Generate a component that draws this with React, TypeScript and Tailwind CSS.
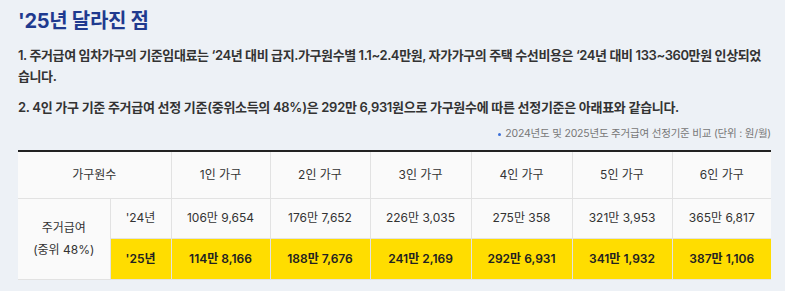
const KR = "font-['Inter','Noto_Sans_CJK_KR',sans-serif]";

const houses = ["1인 가구", "2인 가구", "3인 가구", "4인 가구", "5인 가구", "6인 가구"];
const prev = ["106만 9,654", "176만 7,652", "226만 3,035", "275만 358", "321만 3,953", "365만 6,817"];
const next = ["114만 8,166", "188만 7,676", "241만 2,169", "292만 6,931", "341만 1,932", "387만 1,106"];

export default function App() {
  return (
    <div className={`${KR} w-[785px] h-[291px] bg-[#edf1f6] pl-[18px] pr-[14px] pt-[6px] text-[#333]`}>
      <h1 className="text-[20px] leading-[30px] font-bold text-[#1f3a8f] tracking-[-0.3px]">'25년 달라진 점</h1>

      <p className="mt-[9px] text-[13px] leading-[21px] font-semibold text-[#333] tracking-[-0.4px]">
        <span className="whitespace-nowrap">1. 주거급여 임차가구의 기준임대료는 ‘24년 대비 급지.가구원수별 1.1~2.4만원, 자가가구의 주택 수선비용은 ‘24년 대비 133~360만원 인상되었</span>
        <br />
        습니다.
      </p>
      <p className="mt-[10px] text-[13px] leading-[21px] font-semibold text-[#333] tracking-[-0.3px]">
        2. 4인 가구 기준 주거급여 선정 기준(중위소득의 48%)은 292만 6,931원으로 가구원수에 따른 선정기준은 아래표와 같습니다.
      </p>

      <div className="mt-[8px] flex justify-end items-center gap-[4px] text-[10.5px] leading-[16px] text-[#777] tracking-[-0.2px]">
        <span className="w-[3px] h-[3px] rounded-full bg-[#3b6fd8]" />
        <span>2024년도 및 2025년도 주거급여 선정기준 비교 (단위 : 원/월)</span>
      </div>

      <table className="mt-[8px] w-[753px] border-collapse table-fixed text-[12px] text-[#333]">
        <colgroup>
          <col className="w-[92px]" />
          <col className="w-[61px]" />
          <col className="w-[99px]" />
          <col className="w-[100px]" />
          <col className="w-[101px]" />
          <col className="w-[101px]" />
          <col className="w-[100px]" />
          <col className="w-[99px]" />
        </colgroup>
        <thead>
          <tr className="border-t-2 border-[#222] h-[47px] bg-[#fafafa]">
            <th colSpan={2} className="font-normal border-r border-b border-[#e2e2e2]">가구원수</th>
            {houses.map((h, i) => (
              <th key={h} className={`font-normal border-b border-[#e2e2e2] ${i < 5 ? "border-r" : ""}`}>{h}</th>
            ))}
          </tr>
        </thead>
        <tbody>
          <tr className="h-[40px] bg-[#fafafa]">
            <td rowSpan={2} className="text-center leading-[22px] border-r border-b border-[#e2e2e2]">
              주거급여
              <br />
              (중위 48%)
            </td>
            <td className="text-center border-r border-b border-[#e2e2e2]">'24년</td>
            {prev.map((v, i) => (
              <td key={v} className={`text-center border-b border-[#e2e2e2] ${i < 5 ? "border-r" : ""}`}>{v}</td>
            ))}
          </tr>
          <tr className="h-[41px] bg-[#ffdd00] font-semibold text-[#222]">
            <td className="text-center border-r border-b border-[#e2e2e2]">'25년</td>
            {next.map((v, i) => (
              <td key={v} className={`text-center border-b border-[#e2e2e2] ${i < 5 ? "border-r" : ""}`}>{v}</td>
            ))}
          </tr>
        </tbody>
      </table>
    </div>
  );
}
